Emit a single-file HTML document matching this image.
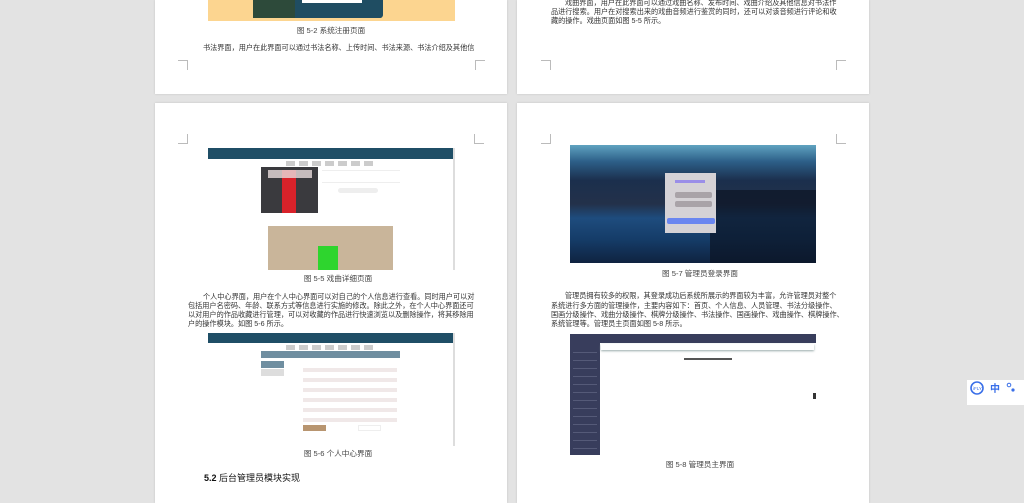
<!DOCTYPE html>
<html><head><meta charset="utf-8"><style>
*{margin:0;padding:0;box-sizing:border-box}
body{width:1024px;height:483px;background:#e3e3e3;position:relative;overflow:hidden;font-family:"Liberation Sans","Noto Sans CJK SC",sans-serif;color:#333}
.pg{position:absolute;background:#fff;box-shadow:0 0 2px rgba(0,0,0,.15)}
.a{position:absolute}
.t{position:absolute;font-size:7.15px;line-height:9.3px;white-space:nowrap;color:#333}
.c{position:absolute;font-size:7.6px;white-space:nowrap;color:#444;transform:translateX(-50%)}
.mk{position:absolute;width:10px;height:10px;border-color:#bbb;border-style:solid;border-width:0}
</style></head><body>
<div class="pg" style="left:155px;top:0;width:352px;height:94px"></div>
<div class="pg" style="left:517px;top:0;width:352px;height:94px"></div>
<div class="pg" style="left:155px;top:103px;width:352px;height:400px"></div>
<div class="pg" style="left:517px;top:103px;width:352px;height:400px"></div>

<div class="a" style="left:208px;top:0;width:247px;height:21px;background:#fcd590"></div>
<div class="a" style="left:253px;top:0;width:130px;height:18px;background:#1f4d62;border-radius:0 0 3px 3px"></div>
<div class="a" style="left:253px;top:0;width:42px;height:18px;background:#2d4a3a"></div>
<div class="a" style="left:302px;top:0;width:60px;height:3px;background:#fff"></div>
<div class="c" style="left:331px;top:25px">图 5-2 系统注册页面</div>
<div class="t" style="left:203px;top:44px">书法界面，用户在此界面可以通过书法名称、上传时间、书法来源、书法介绍及其他信</div>
<div class="mk" style="left:178px;top:60px;border-top-width:1px;border-right-width:1px;width:10px"></div>
<div class="mk" style="left:475px;top:60px;border-top-width:1px;border-left-width:1px"></div>

<div class="t" style="left:565px;top:-1px">戏曲界面，用户在此界面可以通过戏曲名称、发布时间、戏曲介绍及其他信息对书法作</div>
<div class="t" style="left:551px;top:8px">品进行搜索。用户在对搜索出来的戏曲音频进行鉴赏的同时，还可以对该音频进行评论和收</div>
<div class="t" style="left:551px;top:17px">藏的操作。戏曲页面如图 5-5 所示。</div>
<div class="mk" style="left:541px;top:60px;border-top-width:1px;border-right-width:1px"></div>
<div class="mk" style="left:836px;top:60px;border-top-width:1px;border-left-width:1px"></div>

<div class="mk" style="left:178px;top:134px;border-bottom-width:1px;border-right-width:1px"></div>
<div class="mk" style="left:474px;top:134px;border-bottom-width:1px;border-left-width:1px"></div>
<div class="a" style="left:208px;top:148px;width:247px;height:122px;background:#fff;border-right:2px solid #ddd"></div>
<div class="a" style="left:208px;top:148px;width:245px;height:11px;background:#1f4e66"></div>
<div class="a" style="left:286px;top:161px;width:90px;height:5px;background:repeating-linear-gradient(90deg,#ccc 0 9px,transparent 9px 13px)"></div>
<div class="a" style="left:261px;top:167px;width:57px;height:46px;background:#3a3a3e"></div>
<div class="a" style="left:282px;top:170px;width:14px;height:43px;background:#d8222a"></div>
<div class="a" style="left:268px;top:170px;width:44px;height:8px;background:#e8dcdc;opacity:.8"></div>
<div class="a" style="left:322px;top:170px;width:78px;height:1px;background:#eee"></div>
<div class="a" style="left:322px;top:182px;width:78px;height:1px;background:#eee"></div>
<div class="a" style="left:338px;top:188px;width:40px;height:5px;background:#eee;border-radius:3px"></div>
<div class="a" style="left:268px;top:226px;width:125px;height:44px;background:#c9b59a"></div>
<div class="a" style="left:318px;top:246px;width:20px;height:24px;background:#2ed52e"></div>
<div class="c" style="left:338px;top:273px">图 5-5 戏曲详细页面</div>
<div class="t" style="left:203px;top:293px">个人中心界面，用户在个人中心界面可以对自己的个人信息进行查看。同时用户可以对</div>
<div class="t" style="left:188px;top:302px">包括用户名密码、年龄、联系方式等信息进行实施的修改。除此之外，在个人中心界面还可</div>
<div class="t" style="left:188px;top:311px">以对用户的作品收藏进行管理，可以对收藏的作品进行快速浏览以及删除操作，将其移除用</div>
<div class="t" style="left:188px;top:320px">户的操作模块。如图 5-6 所示。</div>
<div class="a" style="left:208px;top:333px;width:247px;height:113px;background:#fff;border-right:2px solid #ddd"></div>
<div class="a" style="left:208px;top:333px;width:245px;height:10px;background:#1f4e66"></div>
<div class="a" style="left:286px;top:345px;width:90px;height:5px;background:repeating-linear-gradient(90deg,#ccc 0 9px,transparent 9px 13px)"></div>
<div class="a" style="left:261px;top:351px;width:139px;height:7px;background:#6f8ea0"></div>
<div class="a" style="left:261px;top:361px;width:23px;height:7px;background:#6f8ea0"></div>
<div class="a" style="left:261px;top:369px;width:23px;height:7px;background:#ddd"></div>
<div class="a" style="left:303px;top:365px;width:94px;height:60px;background:repeating-linear-gradient(180deg,#fff 0 3px,#f0e8e8 3px 7px,#fff 7px 10px)"></div>
<div class="a" style="left:303px;top:425px;width:23px;height:6px;background:#b89570"></div>
<div class="a" style="left:358px;top:425px;width:23px;height:6px;border:1px solid #eee"></div>
<div class="c" style="left:338px;top:448px">图 5-6 个人中心界面</div>
<div class="a" style="left:204px;top:471px;font-size:9px;color:#111"><b>5.2</b> 后台管理员模块实现</div>

<div class="mk" style="left:541px;top:134px;border-bottom-width:1px;border-right-width:1px"></div>
<div class="mk" style="left:836px;top:134px;border-bottom-width:1px;border-left-width:1px"></div>
<div class="a" style="left:570px;top:145px;width:246px;height:118px;background:linear-gradient(180deg,#5fa3c0 0%,#2d5f88 14%,#1b2f4d 30%,#23314a 50%,#1e4c7e 62%,#153c68 80%,#0f2340 100%)"></div>
<div class="a" style="left:710px;top:190px;width:106px;height:73px;background:#0c1424;opacity:.7"></div>
<div class="a" style="left:665px;top:173px;width:51px;height:60px;background:#d5d2d6"></div>
<div class="a" style="left:675px;top:180px;width:30px;height:3px;background:#9a8ee8"></div>
<div class="a" style="left:675px;top:192px;width:37px;height:6px;background:#a9a3a8;border-radius:2px"></div>
<div class="a" style="left:675px;top:201px;width:37px;height:6px;background:#a9a3a8;border-radius:2px"></div>
<div class="a" style="left:667px;top:218px;width:48px;height:6px;background:#6a86f0;border-radius:2px"></div>
<div class="c" style="left:700px;top:268px">图 5-7 管理员登录界面</div>
<div class="t" style="left:565px;top:292px">管理员拥有较多的权限，其登录成功后系统所展示的界面较为丰富，允许管理员对整个</div>
<div class="t" style="left:551px;top:302px">系统进行多方面的管理操作，主要内容如下：首页、个人信息、人员管理、书法分级操作、</div>
<div class="t" style="left:551px;top:311px">国画分级操作、戏曲分级操作、棋牌分级操作、书法操作、国画操作、戏曲操作、棋牌操作、</div>
<div class="t" style="left:551px;top:320px">系统管理等。管理员主页面如图 5-8 所示。</div>
<div class="a" style="left:570px;top:334px;width:246px;height:121px;background:#fff"></div>
<div class="a" style="left:570px;top:334px;width:246px;height:9px;background:#383d5c"></div>
<div class="a" style="left:570px;top:334px;width:30px;height:121px;background:#383d5c"></div>
<div class="a" style="left:573px;top:345px;width:24px;height:108px;background:repeating-linear-gradient(180deg,transparent 0 7px,#555a78 7px 8px)"></div>
<div class="a" style="left:601px;top:344px;width:213px;height:6px;background:#fff;box-shadow:0 1px 2px #9aa"></div>
<div class="a" style="left:684px;top:358px;width:48px;height:2px;background:#555"></div>
<div class="a" style="left:813px;top:393px;width:3px;height:6px;background:#333"></div>
<div class="c" style="left:700px;top:459px">图 5-8 管理员主界面</div>

<div class="a" style="left:967px;top:380px;width:57px;height:25px;background:#fff"></div>
<svg class="a" style="left:968px;top:380px" width="56" height="25">
<circle cx="9" cy="8" r="6" fill="none" stroke="#3a6fe8" stroke-width="1.6"/>
<text x="5" y="10" font-size="4.5" fill="#3a6fe8" font-family="Liberation Sans">iFLY</text>
<text x="22" y="12" font-size="10" font-weight="bold" fill="#3a6fe8" font-family="Noto Sans CJK SC">中</text>
<circle cx="41" cy="5" r="1.8" fill="none" stroke="#3a6fe8" stroke-width="1"/>
<circle cx="45" cy="10" r="1.6" fill="#3a6fe8"/>
</svg>
</body></html>
